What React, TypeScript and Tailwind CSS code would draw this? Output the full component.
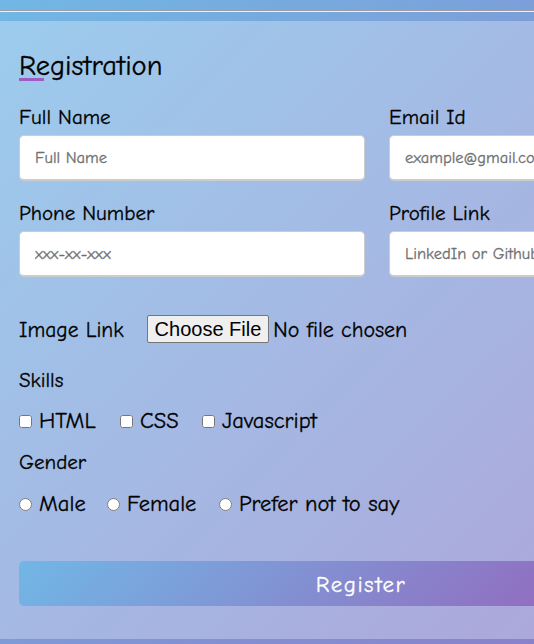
import React from "react";

const font = { fontFamily: '"Comic Sans MS", "Comic Neue", "DejaVu Sans", sans-serif' };

function Field({ label, placeholder }: { label: string; placeholder: string }) {
  return (
    <div className="flex flex-col mb-[20px]">
      <span className="text-[21px] leading-[24px] text-black mb-[6px]">{label}</span>
      <input
        type="text"
        placeholder={placeholder}
        className="h-[46px] w-full rounded-[5px] border border-[#cccccc] border-b-2 bg-white pl-[15px] text-[16.5px] outline-none placeholder:text-[#6f6f6f]"
        style={font}
      />
    </div>
  );
}

export default function App() {
  return (
    <div
      className="w-screen h-screen overflow-hidden bg-[linear-gradient(135deg,#71b7e6,#9b59b6)] bg-[length:1050px_1050px] bg-no-repeat text-black [-webkit-text-stroke-width:0.3px]"
      style={font}
    >
      <div className="h-[10px]" />
      <div className="h-px bg-[#a0a0a0]" />
      <div className="h-px bg-[#e8eef8]" />
      <div className="h-[9px]" />
      <div className="w-[754px] h-[618px] bg-white/30 pl-[19px] pr-[19px] pt-[30px]">
        <div className="relative h-[30px] text-[28.5px] leading-[30px] mb-[24px]">
          Registration
          <span className="absolute left-0 top-[27px] h-[3px] w-[25px] bg-[#a05cc0]" />
        </div>

        <div className="grid grid-cols-[346px_346px] gap-x-[24px]">
          <Field label="Full Name" placeholder="Full Name" />
          <Field label="Email Id" placeholder="example@gmail.com" />
          <Field label="Phone Number" placeholder="xxx-xx-xxx" />
          <Field label="Profile Link" placeholder="LinkedIn or Github" />
        </div>

        <div className="mt-[18px] flex items-center h-[28px]">
          <span className="text-[21.5px] leading-[24px] mr-[23px] pt-[1px]">Image Link</span>
          <button
            type="button"
            className="h-[28px] px-[7px] bg-[#efefef] border border-[#767676] rounded-[2px] text-[20px] leading-[26px] text-black [-webkit-text-stroke-width:0px]"
            style={{ fontFamily: '"Liberation Sans", Arial, sans-serif' }}
          >
            Choose File
          </button>
          <span className="ml-[4px] text-[22px] leading-[24px] pt-[1px]">No file chosen</span>
        </div>

        <div className="mt-[25px] text-[21px] leading-[24px]">Skills</div>

        <div className="mt-[16px] flex items-center h-[26px] text-[22.5px] leading-[26px]">
          <label className="flex items-center w-[101px]">
            <input type="checkbox" className="m-0 w-[13px] h-[13px] mr-[7px]" />
            HTML
          </label>
          <label className="flex items-center w-[82px]">
            <input type="checkbox" className="m-0 w-[13px] h-[13px] mr-[7px]" />
            CSS
          </label>
          <label className="flex items-center">
            <input type="checkbox" className="m-0 w-[13px] h-[13px] mr-[7px]" />
            Javascript
          </label>
        </div>

        <div className="mt-[16px] text-[21px] leading-[24px]">Gender</div>

        <div className="mt-[18px] flex items-center h-[25px] text-[22.5px] leading-[25px]">
          <label className="flex items-center w-[88px]">
            <input type="radio" name="g" className="m-0 w-[13px] h-[13px] mr-[7px]" />
            Male
          </label>
          <label className="flex items-center w-[112px]">
            <input type="radio" name="g" className="m-0 w-[13px] h-[13px] mr-[7px]" />
            Female
          </label>
          <label className="flex items-center">
            <input type="radio" name="g" className="m-0 w-[13px] h-[13px] mr-[7px]" />
            Prefer not to say
          </label>
        </div>

        <button
          type="button"
          className="mt-[44px] h-[45px] w-[684px] rounded-[5px] bg-[linear-gradient(135deg,#71b7e6,#9b59b6)] text-white text-[23px] tracking-[1.5px] flex items-center justify-center pt-[3px]"
          style={font}
        >
          Register
        </button>
      </div>
    </div>
  );
}
